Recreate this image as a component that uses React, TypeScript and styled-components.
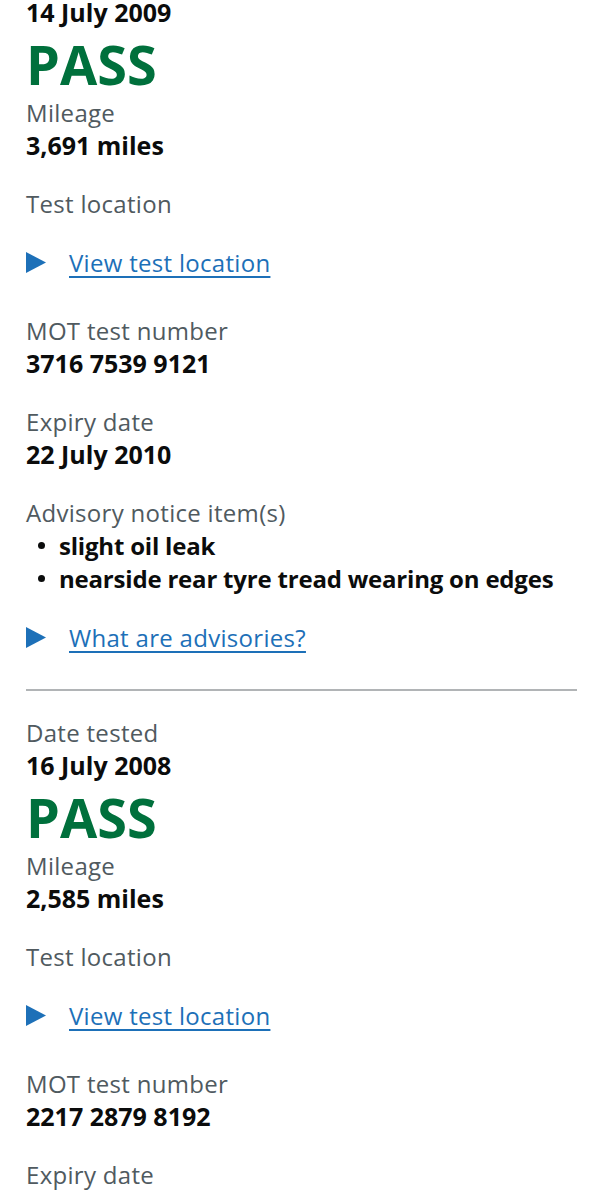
import React from "react";
import styled, { createGlobalStyle } from "styled-components";

const GlobalStyle = createGlobalStyle`
  html, body {
    margin: 0;
    padding: 0;
    background: #ffffff;
  }
  body {
    font-family: "Open Sans", "Noto Sans", Arial, sans-serif;
    color: #0b0c0c;
    -webkit-font-smoothing: antialiased;
  }
`;

interface IMotTest {
  dateTested: string;
  result: string;
  mileage: string;
  testNumber: string;
  expiryDate: string;
  advisories?: string[];
}

const Page = styled.main`
  /* page is scrolled part way into the history list */
  margin-top: -37px;
  padding: 0 25px 0 26px;
`;

const TestSection = styled.section`
  display: flex;
  flex-direction: column;
`;

const Field = styled.div<{ $tight?: boolean }>`
  display: flex;
  flex-direction: column;
  margin-bottom: ${(p) => (p.$tight ? "0" : "25px")};
`;

const Label = styled.span`
  font-size: 24px;
  line-height: 33px;
  font-weight: 400;
  color: #505a5f;
  letter-spacing: 0.3px;
`;

const Value = styled.span`
  font-size: 25px;
  line-height: 33px;
  font-weight: 700;
  color: #0b0c0c;
`;

const Status = styled.strong`
  margin-top: 4px;
  font-size: 54px;
  line-height: 63px;
  font-weight: 700;
  color: #00703c;
`;

const ItemList = styled.ul`
  list-style: none;
  margin: 0;
  padding: 0;
`;

const Item = styled.li`
  display: flex;
  align-items: center;
  font-size: 24px;
  line-height: 33px;
  font-weight: 700;
  letter-spacing: -0.2px;

  &::before {
    content: "";
    flex: none;
    width: 7px;
    height: 7px;
    border-radius: 50%;
    background: #0b0c0c;
    margin: 0 14px 0 12px;
  }
`;

const Details = styled.details`
  margin: 26px 0 10px;
`;

const Summary = styled.summary`
  display: flex;
  align-items: center;
  gap: 23px;
  list-style: none;
  cursor: pointer;

  &::-webkit-details-marker {
    display: none;
  }
`;

const SummaryText = styled.span`
  font-size: 24px;
  line-height: 33px;
  color: #1d70b8;
  letter-spacing: 0.3px;
  text-decoration: underline;
  text-decoration-thickness: 1.5px;
  text-underline-offset: 4px;
`;

const Divider = styled.hr`
  margin: 0 0 25px;
  border: 0;
  border-top: 2px solid #b1b4b6;
`;

const Arrow = () => (
  <svg width="20" height="21" viewBox="0 0 20 21" aria-hidden="true">
    <polygon points="0,0 20,10.5 0,21" fill="#1d70b8" />
  </svg>
);

const Disclosure: React.FC<{ title: string }> = ({ title }) => (
  <Details>
    <Summary>
      <Arrow />
      <SummaryText>{title}</SummaryText>
    </Summary>
  </Details>
);

const tests: IMotTest[] = [
  {
    dateTested: "14 July 2009",
    result: "PASS",
    mileage: "3,691 miles",
    testNumber: "3716 7539 9121",
    expiryDate: "22 July 2010",
    advisories: ["slight oil leak", "nearside rear tyre tread wearing on edges"],
  },
  {
    dateTested: "16 July 2008",
    result: "PASS",
    mileage: "2,585 miles",
    testNumber: "2217 2879 8192",
    expiryDate: "",
  },
];

const MotTest: React.FC<{ test: IMotTest; last?: boolean }> = ({ test, last }) => {
  const { dateTested, result, mileage, testNumber, expiryDate, advisories } = test;

  return (
    <>
      <TestSection>
        <Field $tight>
          <Label>Date tested</Label>
          <Value>{dateTested}</Value>
        </Field>
        <Status>{result}</Status>
        <Field>
          <Label>Mileage</Label>
          <Value>{mileage}</Value>
        </Field>
        <Field>
          <Label>Test location</Label>
          <Disclosure title="View test location" />
        </Field>
        <Field>
          <Label>MOT test number</Label>
          <Value>{testNumber}</Value>
        </Field>
        <Field>
          <Label>Expiry date</Label>
          {expiryDate && <Value>{expiryDate}</Value>}
        </Field>
        {advisories && (
          <Field>
            <Label>Advisory notice item(s)</Label>
            <ItemList>
              {advisories.map((a) => (
                <Item key={a}>{a}</Item>
              ))}
            </ItemList>
            <Disclosure title="What are advisories?" />
          </Field>
        )}
      </TestSection>
      {!last && <Divider />}
    </>
  );
};

export default function App() {
  return (
    <>
      <GlobalStyle />
      <Page>
        {tests.map((t, i) => (
          <MotTest key={t.testNumber} test={t} last={i === tests.length - 1} />
        ))}
      </Page>
    </>
  );
}
